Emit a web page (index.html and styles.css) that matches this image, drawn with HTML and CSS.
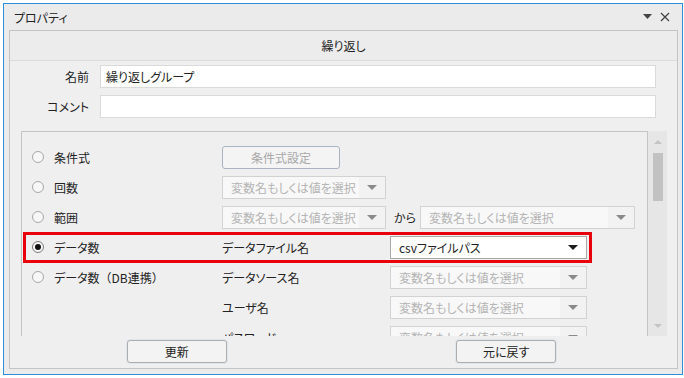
FILE: index.html
```html
<!DOCTYPE html>
<html lang="ja">
<head>
    <meta charset="UTF-8">
    <meta name="viewport" content="width=device-width, initial-scale=1.0">
    <title>プロパティ</title>
    <link rel="stylesheet" href="styles.css">
</head>
<body>
    <div class="window">
        <div class="titlebar">
            <span>プロパティ</span>
            <span class="title-tools">
                <svg width="9" height="6" viewBox="0 0 9 6"><path d="M0 0h9L4.5 5z" fill="#444"/></svg>
                <svg width="10" height="10" viewBox="0 0 10 10"><path d="M1 1l8 8M9 1l-8 8" stroke="#444" stroke-width="1.3"/></svg>
            </span>
        </div>
        <div class="panel">
            <div class="panel-head">繰り返し</div>
            <div class="field">
                <label for="name">名前</label>
                <input type="text" id="name" value="繰り返しグループ">
            </div>
            <div class="field field-gap">
                <label for="comment">コメント</label>
                <input type="text" id="comment">
            </div>

            <div class="scroll-box">
                <div class="scroll-content">
                    <div class="row">
                        <div class="opt"><span class="radio"></span>条件式</div>
                        <button class="btn-sub" disabled>条件式設定</button>
                    </div>
                    <div class="row">
                        <div class="opt"><span class="radio"></span>回数</div>
                        <div class="combo off w-short"><span>変数名もしくは値を選択</span><i class="caret"></i></div>
                    </div>
                    <div class="row">
                        <div class="opt"><span class="radio"></span>範囲</div>
                        <div class="combo off w-short"><span>変数名もしくは値を選択</span><i class="caret"></i></div>
                        <span class="kara">から</span>
                        <div class="combo off w-long"><span>変数名もしくは値を選択</span><i class="caret"></i></div>
                    </div>
                    <div class="row">
                        <div class="highlight"></div>
                        <div class="opt"><span class="radio checked"></span>データ数</div>
                        <div class="sub-label">データファイル名</div>
                        <div class="combo w-data"><span>csvファイルパス</span><i class="caret dark"></i></div>
                    </div>
                    <div class="row">
                        <div class="opt"><span class="radio"></span>データ数<span class="wide">（DB連携）</span></div>
                        <div class="sub-label">データソース名</div>
                        <div class="combo off w-data"><span>変数名もしくは値を選択</span><i class="caret"></i></div>
                    </div>
                    <div class="row">
                        <div class="opt"></div>
                        <div class="sub-label">ユーザ名</div>
                        <div class="combo off w-data"><span>変数名もしくは値を選択</span><i class="caret"></i></div>
                    </div>
                    <div class="row">
                        <div class="opt"></div>
                        <div class="sub-label">パスワード</div>
                        <div class="combo off w-data"><span>変数名もしくは値を選択</span><i class="caret"></i></div>
                    </div>
                </div>
                <div class="scrollbar">
                    <i class="arrow-up"></i>
                    <div class="thumb"></div>
                    <i class="arrow-down"></i>
                </div>
            </div>

            <div class="actions">
                <div><button class="btn">更新</button></div>
                <div class="right"><button class="btn">元に戻す</button></div>
            </div>
        </div>
    </div>
</body>
</html>
```

FILE: styles.css
```css
* {
    box-sizing: border-box;
}
body {
    margin: 0;
    background: #fff;
    font-family: "Noto Sans CJK JP", "Noto Sans", sans-serif;
    font-size: 12px;
    font-feature-settings: "palt";
    color: #222;
}
.window {
    margin: 3px 0 0 3px;
    width: 680px;
    height: 372px;
    border: 1px solid #2d8ddb;
    background: #ebebeb;
    display: flex;
    flex-direction: column;
}
.titlebar {
    height: 26px;
    padding: 0 12px 0 10px;
    display: flex;
    align-items: center;
    justify-content: space-between;
}
.title-tools {
    display: flex;
    align-items: center;
    gap: 8px;
}
.panel {
    flex: 1;
    margin: 0 4px 5px 5px;
    border: 1px solid #c4c4c4;
    background: #efefef;
    display: flex;
    flex-direction: column;
}
.panel-head {
    height: 30px;
    line-height: 29px;
    text-align: center;
    background: #ececec;
    border-bottom: 1px solid #dcdcdc;
}
.field {
    display: flex;
    align-items: center;
    margin-top: 4px;
}
.field-gap {
    margin-top: 7px;
}
.field label {
    width: 80px;
    padding-right: 1px;
    text-align: right;
    margin-right: 10px;
}
.field input {
    flex: 1;
    height: 23px;
    margin-right: 21px;
    border: 1px solid #dadada;
    background: #fff;
    padding: 0 5px;
    font: inherit;
    color: #222;
    outline: none;
}
.scroll-box {
    height: 205px;
    margin: 13px 10px 0 11px;
    display: flex;
}
.scroll-content {
    flex: 1;
    border: 1px solid #c4c4c4;
    border-bottom: none;
    overflow: hidden;
    padding-top: 10px;
}
.row {
    position: relative;
    height: 30px;
    display: flex;
    align-items: center;
}
.opt {
    width: 200px;
    display: flex;
    align-items: center;
    padding-left: 10px;
}
.wide {
    font-feature-settings: normal;
}
.radio {
    width: 12px;
    height: 12px;
    border: 1px solid #a8a8a8;
    border-radius: 50%;
    background: #f7f7f7;
    margin-right: 10px;
    position: relative;
}
.radio.checked {
    border-color: #7a7a7a;
}
.radio.checked::after {
    content: "";
    position: absolute;
    left: 2px;
    top: 2px;
    width: 6px;
    height: 6px;
    border-radius: 50%;
    background: #111;
}
.btn-sub {
    width: 118px;
    height: 23px;
    border: 1px solid #a9b4c2;
    border-radius: 3px;
    background: #f4f4f4;
    color: #a8a8a8;
    font: inherit;
    padding: 0;
}
.combo {
    height: 23px;
    display: flex;
    align-items: center;
    border: 1px solid #a9a9a9;
    background: #fff;
}
.combo span {
    flex: 1;
    padding-left: 8px;
    white-space: nowrap;
    overflow: hidden;
}
.combo.off {
    border-color: #d2d2d2;
    background: #f8f8f8;
    color: #b4b4b4;
}
.caret {
    width: 26px;
    height: 100%;
    display: flex;
    align-items: center;
    justify-content: center;
}
.combo.off .caret {
    background: #f2f2f2;
}
.caret::before {
    content: "";
    border-left: 5px solid transparent;
    border-right: 5px solid transparent;
    border-top: 5px solid #8a8a8a;
}
.caret.dark::before {
    border-top-color: #1a1a1a;
}
.w-short {
    width: 164px;
}
.w-long {
    width: 215px;
}
.w-data {
    width: 197px;
}
.kara {
    width: 34px;
    padding-left: 8px;
}
.sub-label {
    width: 168px;
}
.highlight {
    position: absolute;
    left: 1px;
    top: 0;
    width: 569px;
    height: 31px;
    border: 3px solid #e8000b;
}
.scrollbar {
    width: 19px;
    background: #e6e6e6;
    display: flex;
    flex-direction: column;
    align-items: center;
    padding-left: 1px;
}
.arrow-up {
    margin-top: 9px;
    border-left: 4px solid transparent;
    border-right: 4px solid transparent;
    border-bottom: 4px solid #c4c4c4;
}
.thumb {
    margin-top: 9px;
    width: 10px;
    height: 48px;
    background: #c2c2c2;
}
.arrow-down {
    margin-top: auto;
    margin-bottom: 8px;
    border-left: 4px solid transparent;
    border-right: 4px solid transparent;
    border-top: 4px solid #c4c4c4;
}
.actions {
    display: grid;
    grid-template-columns: 1fr 1fr;
    padding-top: 4px;
}
.actions div {
    display: flex;
    justify-content: center;
}
.actions .right {
    padding-right: 8px;
}
.btn {
    width: 100px;
    height: 23px;
    border: 1px solid #adadad;
    border-radius: 3px;
    background: #f3f3f3;
    font: inherit;
    color: #222;
    padding: 0;
    box-shadow: 0 0 0 1px #dfe6ee;
}
```
